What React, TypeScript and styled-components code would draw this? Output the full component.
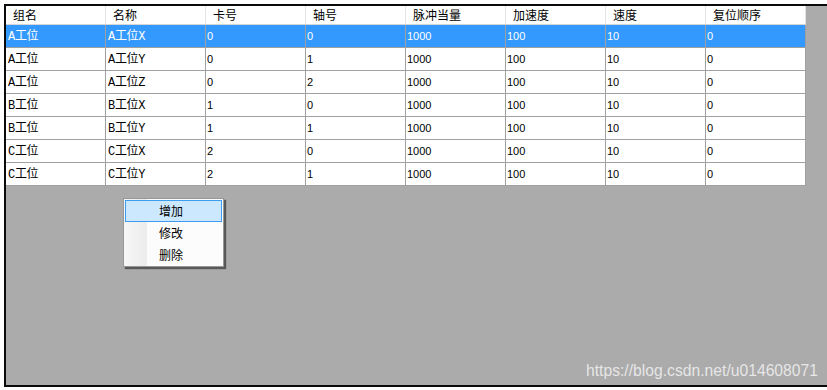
import React from 'react'
import styled, { createGlobalStyle } from 'styled-components'

const GlobalStyle = createGlobalStyle`
  html, body {
    margin: 0;
    padding: 0;
    background: #ffffff;
    overflow: hidden;
  }
  * {
    box-sizing: border-box;
  }
`

const Page = styled.div`
  width: 827px;
  height: 390px;
  padding: 4px 0 0 4px;
`

const Frame = styled.div`
  position: relative;
  width: 823px;
  height: 383px;
  background: #ababab;
  border: 2px solid #0a0a0a;
  border-right: none;
`

const Grid = styled.div`
  display: flex;
  flex-direction: column;
  width: 800px;
  background: #ffffff;
`

const HeaderRow = styled.div`
  display: grid;
  grid-template-columns: repeat(8, 100px);
  height: 19px;
  border-bottom: 1px solid #d5d5d5;
`

const HeaderCell = styled.div`
  padding-left: 7px;
  border-right: 1px solid #e5e5e5;
  font-family: 'Noto Sans CJK SC', sans-serif;
  font-size: 12px;
  line-height: 18px;
  color: #000000;
  white-space: nowrap;
`

const Row = styled.div<{ $selected?: boolean }>`
  display: grid;
  grid-template-columns: repeat(8, 100px);
  height: 23px;
  border-bottom: 1px solid #a0a0a0;
  background: ${props => (props.$selected ? '#3399ff' : '#ffffff')};
  color: ${props => (props.$selected ? '#ffffff' : '#000000')};
`

const Cell = styled.div<{ $mono?: boolean }>`
  padding-left: ${props => (props.$mono ? '2px' : '1px')};
  padding-top: ${props => (props.$mono ? '2px' : '0')};
  border-right: 1px solid #a0a0a0;
  font-family: ${props =>
    props.$mono
      ? "'Liberation Mono', 'Noto Sans CJK SC', monospace"
      : "'Liberation Sans', sans-serif"};
  font-size: ${props => (props.$mono ? '12px' : '11px')};
  line-height: ${props => (props.$mono ? '20px' : '22px')};
  letter-spacing: ${props => (props.$mono ? '-0.3px' : '0')};
  white-space: nowrap;
  overflow: hidden;
`

const Menu = styled.div`
  position: absolute;
  left: 117px;
  top: 192px;
  width: 101px;
  padding: 1px 1px 0 1px;
  border: 1px solid #979797;
  background: linear-gradient(to right, #f6f6f6 0px, #ececec 23px, #fcfcfc 23px, #fcfcfc 100%);
  box-shadow: 2px 2px 1px rgba(60, 60, 60, 0.75);
`

const MenuItem = styled.div<{ $active?: boolean }>`
  height: 22px;
  padding-left: 33px;
  border: 1px solid ${props => (props.$active ? '#3c9cf0' : 'transparent')};
  background: ${props => (props.$active ? '#cce8ff' : 'transparent')};
  font-family: 'Noto Sans CJK SC', sans-serif;
  font-size: 12px;
  line-height: 19px;
  color: #000000;
`

const Watermark = styled.div`
  position: absolute;
  right: 9px;
  bottom: 5px;
  font-family: 'Liberation Sans', Arial, sans-serif;
  font-size: 15.7px;
  line-height: 18px;
  color: rgba(255, 255, 255, 0.72);
  white-space: nowrap;
`

const headers = ['组名', '名称', '卡号', '轴号', '脉冲当量', '加速度', '速度', '复位顺序']

const rows = [
  ['A工位', 'A工位X', '0', '0', '1000', '100', '10', '0'],
  ['A工位', 'A工位Y', '0', '1', '1000', '100', '10', '0'],
  ['A工位', 'A工位Z', '0', '2', '1000', '100', '10', '0'],
  ['B工位', 'B工位X', '1', '0', '1000', '100', '10', '0'],
  ['B工位', 'B工位Y', '1', '1', '1000', '100', '10', '0'],
  ['C工位', 'C工位X', '2', '0', '1000', '100', '10', '0'],
  ['C工位', 'C工位Y', '2', '1', '1000', '100', '10', '0'],
]

const menuItems = ['增加', '修改', '删除']

export default function App() {
  return (
    <Page>
      <GlobalStyle />
      <Frame>
        <Grid>
          <HeaderRow>
            {headers.map(h => (
              <HeaderCell key={h}>{h}</HeaderCell>
            ))}
          </HeaderRow>
          {rows.map((r, i) => (
            <Row key={i} $selected={i === 0}>
              {r.map((v, j) => (
                <Cell key={j} $mono={j < 2}>{v}</Cell>
              ))}
            </Row>
          ))}
        </Grid>

        <Menu>
          {menuItems.map((m, i) => (
            <MenuItem key={m} $active={i === 0}>{m}</MenuItem>
          ))}
        </Menu>

        <Watermark>https://blog.csdn.net/u014608071</Watermark>
      </Frame>
    </Page>
  )
}
